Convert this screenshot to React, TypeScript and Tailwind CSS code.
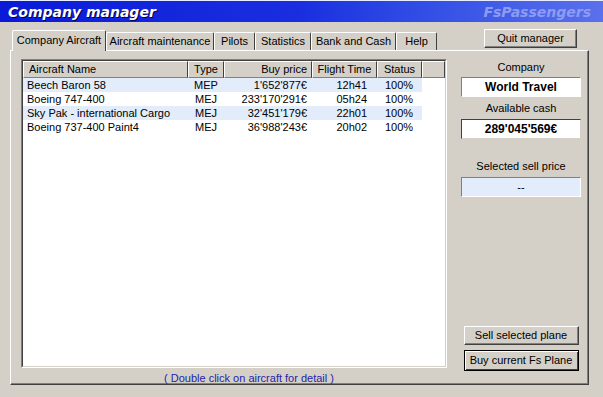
import React from "react";

const rows = [
  { name: "Beech Baron 58", type: "MEP", price: "1'652'877€", time: "12h41", status: "100%", hl: true },
  { name: "Boeing 747-400", type: "MEJ", price: "233'170'291€", time: "05h24", status: "100%", hl: false },
  { name: "Sky Pak - international Cargo", type: "MEJ", price: "32'451'179€", time: "22h01", status: "100%", hl: true },
  { name: "Boeing 737-400 Paint4", type: "MEJ", price: "36'988'243€", time: "20h02", status: "100%", hl: false },
];

const tabs = [
  { label: "Aircraft maintenance", w: "w-[108px]" },
  { label: "Pilots", w: "w-[41px]" },
  { label: "Statistics", w: "w-[56px]" },
  { label: "Bank and Cash", w: "w-[85px]" },
  { label: "Help", w: "w-[41px]" },
];

function HeaderCell({ w, label, align = "left" }: { w: string; label: string; align?: "left" | "right" | "center" }) {
  const a = align === "right" ? "justify-end pr-[4px]" : align === "center" ? "justify-center" : "pl-[5px]";
  return (
    <div
      className={`${w} flex h-full items-center whitespace-nowrap border-t border-l border-t-white border-l-white border-r border-b border-r-[#404040] border-b-[#808080] ${a}`}
    >
      {label}
    </div>
  );
}

export default function App() {
  return (
    <div
      className="relative h-[397px] w-[603px] overflow-hidden bg-[#d4d0c8] text-[11px] leading-none text-black"
      style={{ fontFamily: '"Liberation Sans", Arial, sans-serif' }}
    >
      {/* title bar */}
      <div className="flex h-[22px] items-center justify-between border-t border-t-[#e8ecff] bg-gradient-to-r from-[#0a1ad8] via-[#1a2ee0] to-[#5a70ec] px-[8px]">
        <span
          className="text-[14px] font-bold italic text-white [text-shadow:1px_1px_0_#000050]"
          style={{ fontFamily: '"DejaVu Sans", Verdana, sans-serif' }}
        >
          Company manager
        </span>
        <span
          className="mr-[4px] text-[14px] font-bold italic text-[#8d9cf2]"
          style={{ fontFamily: '"DejaVu Sans", Verdana, sans-serif' }}
        >
          FsPassengers
        </span>
      </div>

      {/* tabs row */}
      <div className="flex items-end pl-[12px] pt-[7px]">
        <div className="relative z-10 -mb-px flex h-[21px] w-[94px] items-center justify-center whitespace-nowrap rounded-t-[2px] border-t border-l border-t-white border-l-white border-r border-r-[#404040] bg-[#d4d0c8] pb-[2px]">
          Company Aircraft
        </div>
        {tabs.map((t) => (
          <div
            key={t.label}
            className={`${t.w} flex h-[18px] items-center justify-center whitespace-nowrap rounded-t-[2px] border-t border-l border-t-white border-l-white border-r border-r-[#404040]`}
          >
            {t.label}
          </div>
        ))}
        <div className="flex-1" />
        <button className="mb-[2px] mr-[26px] flex h-[19px] w-[93px] items-center justify-center border border-t-white border-l-white border-r-[#404040] border-b-[#404040] bg-[#d4d0c8] shadow-[inset_-1px_-1px_0_#808080]">
          Quit manager
        </button>
      </div>

      {/* panel */}
      <div className="ml-[10px] flex h-[335px] w-[579px] border-t border-l border-t-white border-l-white border-r border-b border-r-[#404040] border-b-[#404040] shadow-[inset_-1px_-1px_0_#808080] pl-[10px] pt-[8px]">
        <div className="flex flex-col">
          {/* list view */}
          <div className="h-[313px] w-[426px] border border-t-[#808080] border-l-[#808080] border-r-white border-b-white">
            <div className="h-full w-full border border-t-[#404040] border-l-[#404040] border-r-[#d4d0c8] border-b-[#d4d0c8] bg-white">
              <div className="flex h-[17px] bg-[#d4d0c8]">
                <HeaderCell w="w-[165px]" label="Aircraft Name" />
                <HeaderCell w="w-[36px]" label="Type" align="center" />
                <HeaderCell w="w-[88px]" label="Buy price" align="right" />
                <HeaderCell w="w-[65px]" label="Flight Time" align="center" />
                <HeaderCell w="w-[45px]" label="Status" align="center" />
                <HeaderCell w="w-[23px]" label="" />
              </div>
              {rows.map((r) => (
                <div key={r.name} className={`flex h-[14px] w-[399px] items-center whitespace-nowrap ${r.hl ? "bg-[#e2ecfb]" : ""}`}>
                  <div className="w-[165px] pl-[4px]">{r.name}</div>
                  <div className="w-[36px] text-center">{r.type}</div>
                  <div className="w-[88px] pr-[5px] text-right">{r.price}</div>
                  <div className="w-[65px] pr-[10px] text-right">{r.time}</div>
                  <div className="w-[45px] pl-[8px]">{r.status}</div>
                </div>
              ))}
            </div>
          </div>
          <div className="pl-[30px] pt-[5px] text-center text-[#2424a8]">( Double click on aircraft for detail )</div>
        </div>

        {/* right column */}
        <div className="ml-[14px] flex w-[120px] flex-col items-center">
          <div className="pt-[3px]">Company</div>
          <div className="mt-[4px] flex h-[20px] w-[120px] items-center justify-center border border-t-[#808080] border-l-[#808080] border-r-white border-b-white bg-white text-[12px] font-bold">
            World Travel
          </div>
          <div className="mt-[6px]">Available cash</div>
          <div className="mt-[5px] flex h-[20px] w-[120px] items-center justify-center border border-t-[#404040] border-l-[#404040] border-r-[#d4d0c8] border-b-[#d4d0c8] bg-white text-[12px] font-bold">
            289'045'569€
          </div>
          <div className="mt-[22px]">Selected sell price</div>
          <div className="mt-[5px] flex h-[20px] w-[120px] items-center justify-center border border-t-[#808080] border-l-[#808080] border-r-white border-b-white bg-[#e2ecfb]">
            --
          </div>
          <div className="flex-1" />
          <button className="flex h-[19px] w-[115px] items-center justify-center border border-t-white border-l-white border-r-[#404040] border-b-[#404040] bg-[#d4d0c8] shadow-[inset_-1px_-1px_0_#808080]">
            Sell selected plane
          </button>
          <button className="mt-[5px] mb-[13px] flex h-[21px] w-[115px] items-center justify-center border border-black bg-[#d4d0c8] shadow-[inset_1px_1px_0_#fff,inset_-1px_-1px_0_#404040]">
            Buy current Fs Plane
          </button>
        </div>
      </div>
    </div>
  );
}
